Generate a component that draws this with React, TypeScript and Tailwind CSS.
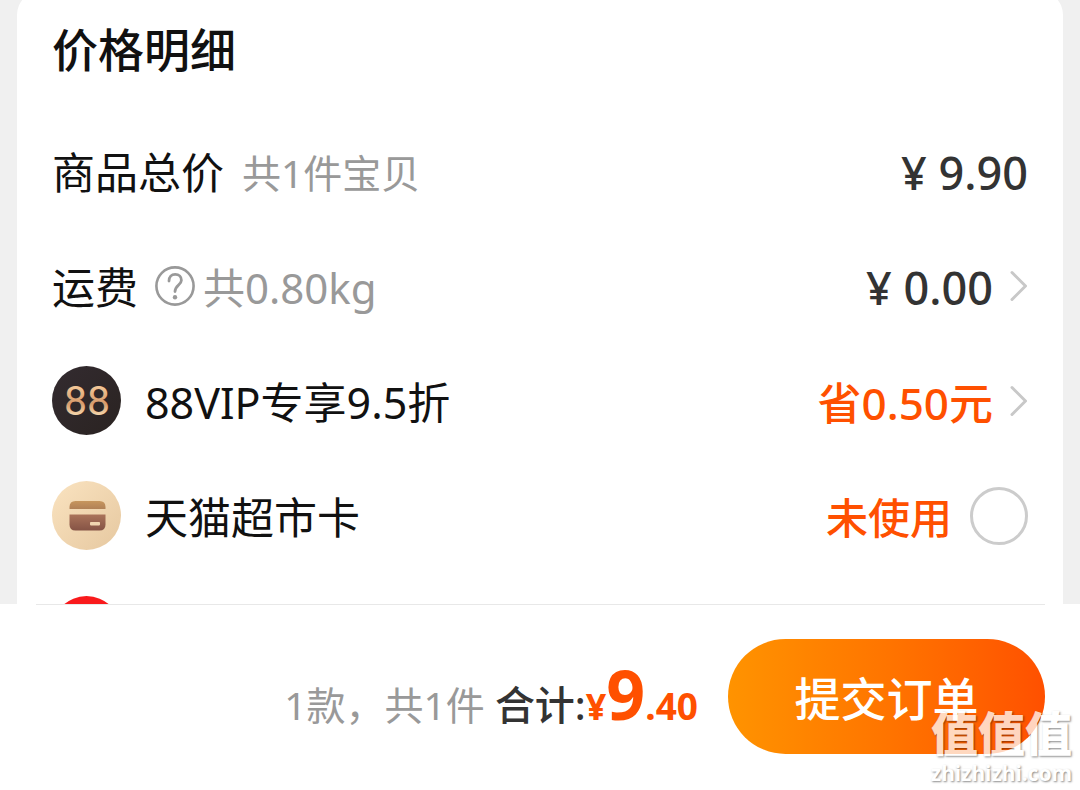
import type { ReactNode } from "react";

function Chevron() {
  return (
    <svg className="mb-1 h-8 w-[18px]" viewBox="0 0 18 32" fill="none" aria-hidden="true">
      <path d="M2 2.5 L15.5 16 L2 29.5" stroke="#c8c8c8" strokeWidth="3" strokeLinecap="round" strokeLinejoin="round" />
    </svg>
  );
}

function HelpIcon() {
  return (
    <svg className="h-10 w-10" viewBox="0 0 40 40" fill="none" stroke="#999999" aria-hidden="true">
      <circle cx="20" cy="20" r="18.6" strokeWidth="2.6" />
      <path
        d="M14 15 C14 11 16.4 8.4 20.2 8.4 C24 8.4 26.4 10.9 26.4 14.2 C26.4 18.8 20 19.4 20 25.6"
        strokeWidth="2.8"
        strokeLinecap="round"
      />
      <circle cx="20" cy="31.2" r="2.2" fill="#999999" stroke="none" />
    </svg>
  );
}

function VipBadge() {
  return (
    <svg className="h-[69px] w-[69px]" viewBox="0 0 69 69" aria-hidden="true">
      <defs>
        <linearGradient id="vipBack" x1="0" y1="0" x2="1" y2="1">
          <stop offset="0" stopColor="#332b30" />
          <stop offset="1" stopColor="#2a2321" />
        </linearGradient>
        <linearGradient id="vipGold" x1="0" y1="0" x2="0" y2="1">
          <stop offset="0.2" stopColor="#f3c797" />
          <stop offset="0.55" stopColor="#d79a6b" />
          <stop offset="0.8" stopColor="#f6d9ae" />
        </linearGradient>
      </defs>
      <circle cx="34.5" cy="34.5" r="34.5" fill="url(#vipBack)" />
      <text x="35" y="49" textAnchor="middle" fill="url(#vipGold)" className="font-['Roboto',sans-serif] text-[41px]">
        88
      </text>
    </svg>
  );
}

function CardBadge() {
  return (
    <svg className="h-[69px] w-[69px]" viewBox="0 0 69 69" aria-hidden="true">
      <defs>
        <linearGradient id="cardBack" x1="0" y1="0" x2="1" y2="1">
          <stop offset="0" stopColor="#fae3c0" />
          <stop offset="1" stopColor="#e6c8a0" />
        </linearGradient>
        <linearGradient id="cardTop" x1="0" y1="0" x2="0" y2="1">
          <stop offset="0" stopColor="#c7965e" />
          <stop offset="1" stopColor="#b18157" />
        </linearGradient>
        <linearGradient id="cardBody" x1="0" y1="0" x2="0" y2="1">
          <stop offset="0" stopColor="#aa735a" />
          <stop offset="1" stopColor="#855345" />
        </linearGradient>
      </defs>
      <circle cx="34.5" cy="34.5" r="34.5" fill="url(#cardBack)" />
      <path d="M17.5 28 V26 Q17.5 20 23.5 20 H47.5 Q53.5 20 53.5 26 V28 Z" fill="url(#cardTop)" />
      <path d="M17.5 33.5 H53.5 V43.5 Q53.5 49.5 47.5 49.5 H23.5 Q17.5 49.5 17.5 43.5 Z" fill="url(#cardBody)" />
      <rect x="38" y="41" width="10" height="3.4" rx="0.8" fill="#f0d5b0" />
    </svg>
  );
}

function Row({ children }: { children: ReactNode }) {
  return <div className="flex h-[115px] shrink-0 items-center justify-between leading-[64px]">{children}</div>;
}

export default function App() {
  return (
    <div className="relative flex h-screen flex-col overflow-hidden bg-white font-['Noto_Sans','Noto_Sans_CJK_SC',sans-serif] text-[#111111]">
      <main className="min-h-0 flex-1 overflow-hidden bg-[#f0f0f0] px-[17px]">
        <section className="-mt-[9px] rounded-t-3xl bg-white px-[35px]">
          <h1 className="flex h-[122px] items-start pt-6 text-[46px] leading-[68px] font-medium">价格明细</h1>

          <Row>
            <div className="flex items-center gap-[18px] pt-1">
              <span className="text-[43px]">商品总价</span>
              <span className="text-[39px] text-[#999999]">共1件宝贝</span>
            </div>
            <span className="pt-1 text-[45px] font-medium text-[#333333]">¥ 9.90</span>
          </Row>

          <Row>
            <div className="flex items-center">
              <span className="pt-1 text-[43px]">运费</span>
              <button type="button" aria-label="运费说明" className="ml-[17px] mr-2">
                <HelpIcon />
              </button>
              <span className="pt-1 text-[42px] text-[#999999]">共0.80kg</span>
            </div>
            <button type="button" className="flex items-center gap-[17px] pt-1 text-[45px] font-medium text-[#333333]">
              ¥ 0.00
              <Chevron />
            </button>
          </Row>

          <Row>
            <div className="flex items-center gap-6">
              <VipBadge />
              <span className="pt-1 text-[43px]">88VIP专享9.5折</span>
            </div>
            <button type="button" className="flex items-center gap-[17px] pt-1 text-[44px] font-medium text-[#ff5000]">
              省0.50元
              <Chevron />
            </button>
          </Row>

          <Row>
            <div className="flex items-center gap-6">
              <CardBadge />
              <label htmlFor="market-card" className="pt-1 text-[43px]">天猫超市卡</label>
            </div>
            <div className="flex items-center gap-[18px] text-[42px] font-medium text-[#ff5000]">
              <span className="pt-1">未使用</span>
              <input
                id="market-card"
                type="checkbox"
                className="h-[58px] w-[58px] appearance-none rounded-full border-3 border-[#cccccc] bg-white checked:border-[#ff5000] checked:bg-[#ff5000]"
              />
            </div>
          </Row>

          <Row>
            <span className="h-[69px] w-[69px] rounded-full bg-[#f91a1c]" />
          </Row>
        </section>
      </main>

      <footer className="shrink-0 pr-[35px] pb-9 pl-9">
        <div className="flex items-center justify-end border-t border-[#e8e8e8] pt-[34px]">
          <p className="flex items-baseline pt-0.5 whitespace-nowrap">
            <span className="text-[39px] text-[#999999]">1款，共1件</span>
            <span className="ml-2.5 text-[40px] font-medium text-[#333333]">合计:</span>
            <span className="font-bold text-[#ff5000]">
              <span className="text-[36px]">¥</span>
              <span className="text-[68px] leading-none">9</span>
              <span className="text-[37px]">.40</span>
            </span>
          </p>
          <button
            type="button"
            className="ml-[30px] h-[115px] w-[317px] rounded-full bg-linear-to-r from-[#ff9300] to-[#ff5000] pt-1 text-[46px] font-medium text-white"
          >
            提交订单
          </button>
        </div>
      </footer>

      <div className="pointer-events-none absolute right-2 bottom-1 flex flex-col items-end gap-0.5 text-white opacity-75 [text-shadow:1px_1px_2px_rgb(0_0_0/0.6)]">
        <span className="text-[47px] leading-[50px] font-black">值值值</span>
        <span className="text-[21px] leading-[26px] font-bold">zhizhizhi.com</span>
      </div>
    </div>
  );
}
